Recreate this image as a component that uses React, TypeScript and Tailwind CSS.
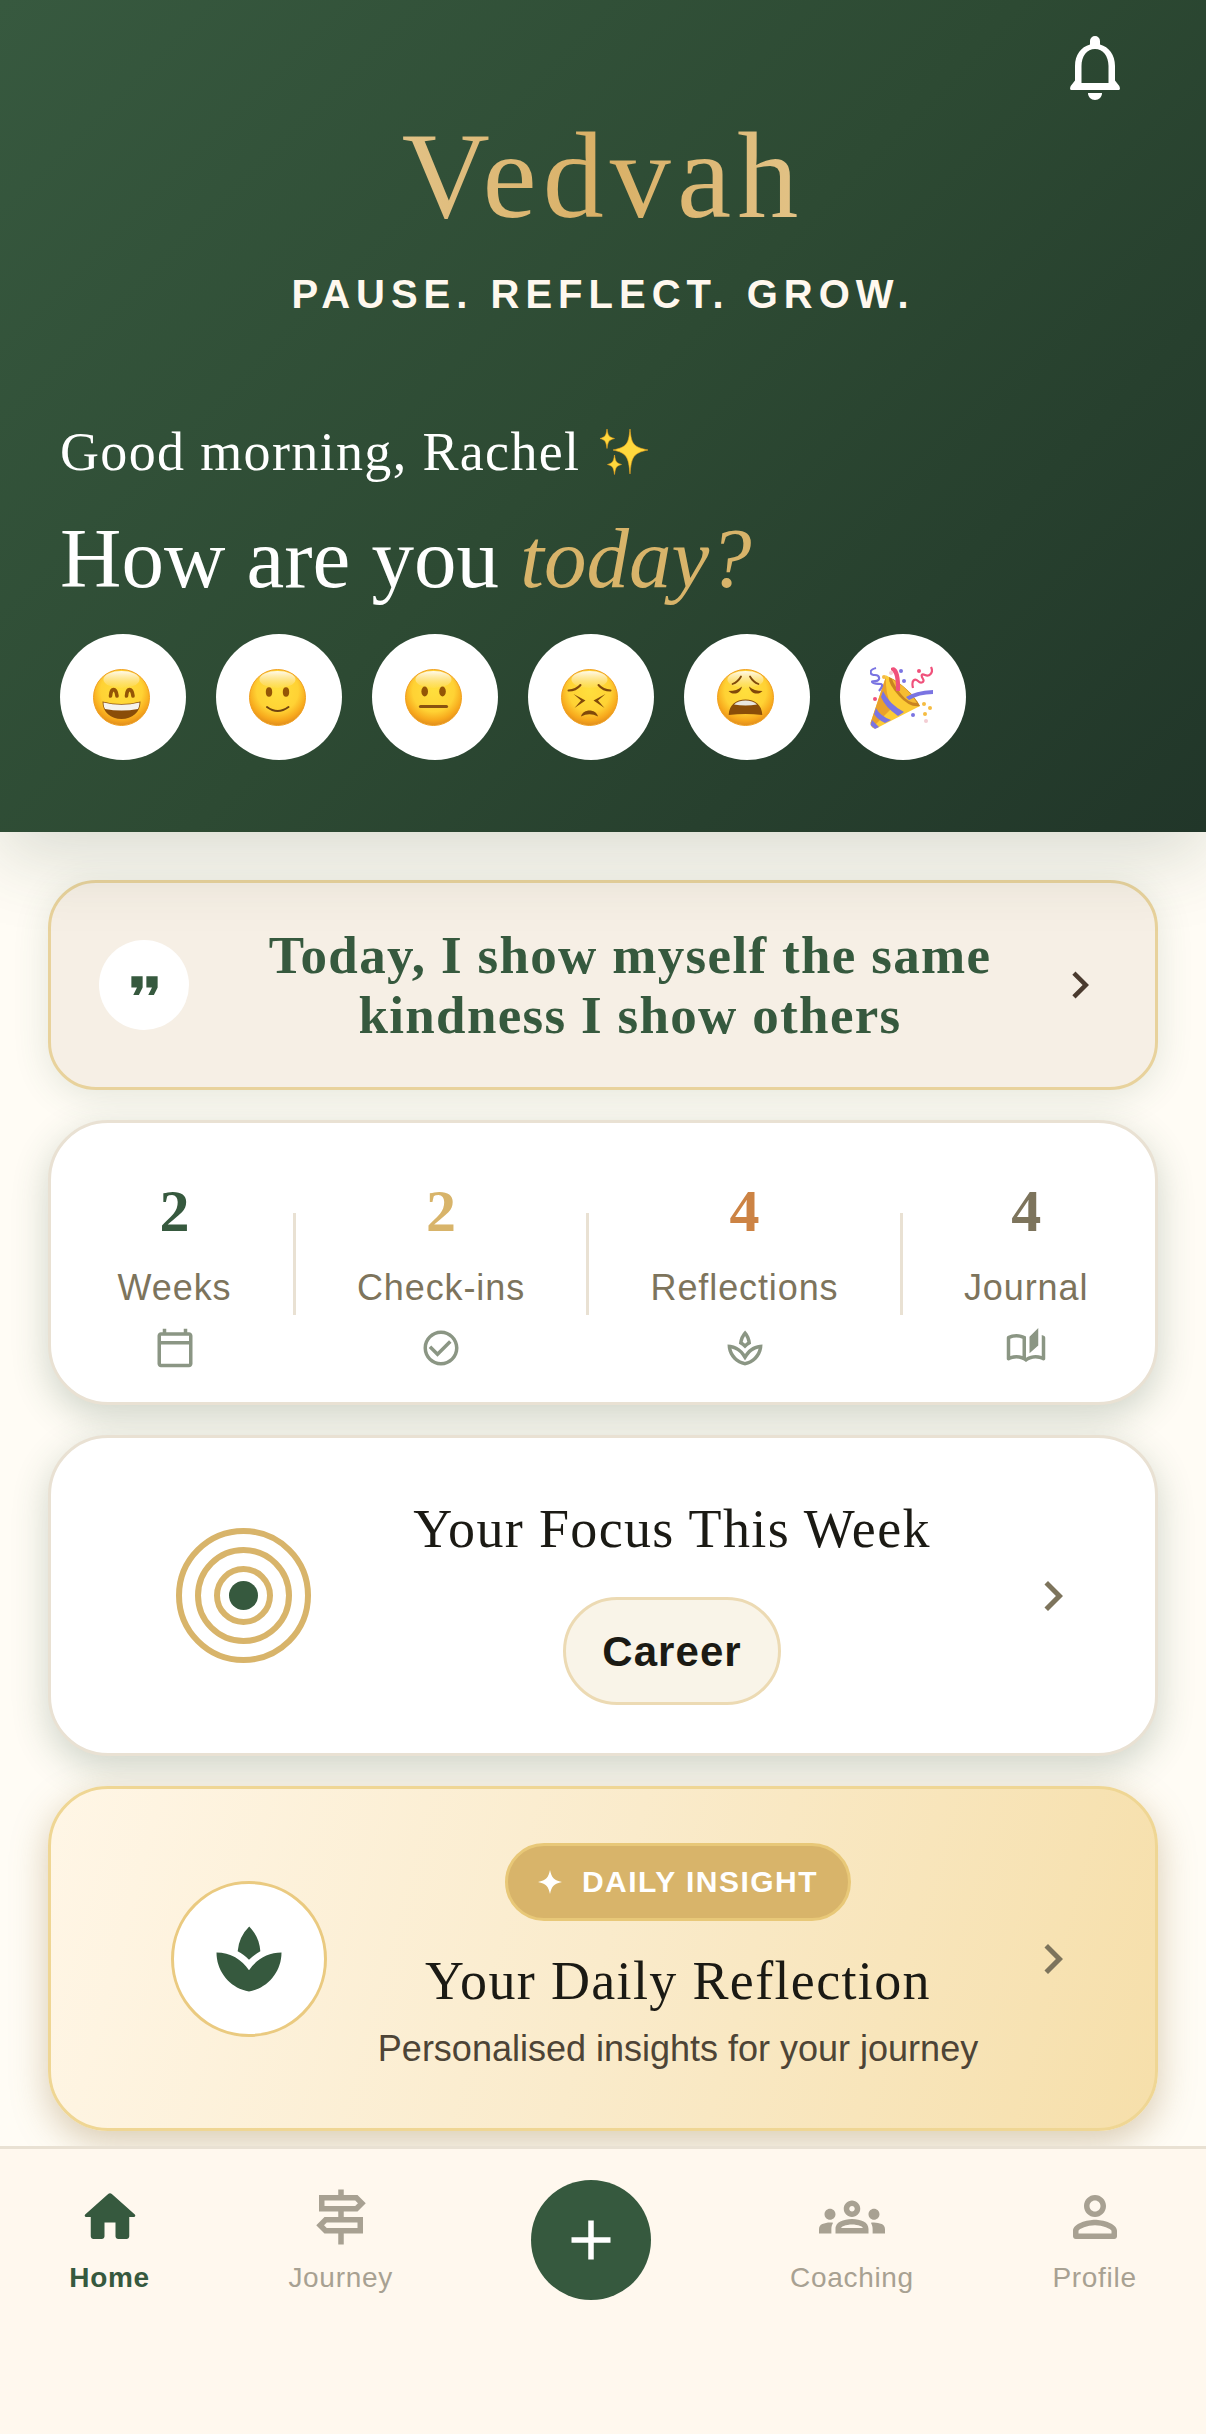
import React from "react";
import {
  MdChevronRight,
  MdCheckCircleOutline,
  MdFormatQuote,
  MdOutlineAutoStories,
  MdOutlineCalendarToday,
  MdOutlineGroups,
  MdOutlineSignpost,
  MdOutlineSpa,
  MdSpa,
} from "react-icons/md";

const serif = "font-['Liberation_Serif',serif]";

const BellIcon = () => (
  <svg viewBox="0 0 50 64" className="w-[50px] h-16" fill="white" aria-hidden="true">
    <path
      fillRule="evenodd"
      d="M20 5a5 5 0 0 1 10 0v3.5C39 11 45 19 45 30v14.500l4.300 5.500c1.700 4-.3 4-2.300 4H3c-2 0-4 0-2.300-4L5 44.500V30C5 19 11 11 20 8.500zM25 13c-8 0-13.500 7-13.500 17v17h27V30C38.500 20 33 13 25 13z"
    />
    <path d="M18 57h14c0 4-3 7-7 7s-7-3-7-7z" />
  </svg>
);

const Sparkles = () => (
  <svg viewBox="0 0 48 48" className="w-12 h-12" fill="#ffd93d" stroke="#f0a51e" strokeWidth="0.600" role="img" aria-label="sparkles">
    <path d="M30 1c1.500 15 3 18 18 21-15 3-16.500 7-18 24-1.500-17-3-21-17-24 14-3 15.500-6 17-21z" />
    <path d="M7 1c1 7 2 8 7.500 9.500C9 12 8 13 7 20.500 6 13 5 12 0 10.500 5 9 6 8 7 1z" />
    <path d="M14.500 27c1 7 2 8 7 9.500-5 1.500-6 2.500-7 10-1-7.500-2-8.500-7-10 5-1.500 6-2.500 7-9.500z" />
  </svg>
);

const Face = ({ children }: { children: React.ReactNode }) => (
  <svg viewBox="0 0 57 57" className="w-[57px] h-[57px]" aria-hidden="true">
    <defs>
      <radialGradient id="skin" cx="0.5" cy="0.38" r="0.62">
        <stop offset="0" stopColor="#ffdf3d" />
        <stop offset="0.6" stopColor="#ffd234" />
        <stop offset="0.85" stopColor="#f7a81c" />
        <stop offset="1" stopColor="#e08d1e" />
      </radialGradient>
      <linearGradient id="shine" x1="0" y1="0" x2="0" y2="1">
        <stop offset="0" stopColor="#fff" stopOpacity="0.9" />
        <stop offset="1" stopColor="#fbe9b8" stopOpacity="0.1" />
      </linearGradient>
    </defs>
    <circle cx="28.5" cy="28.5" r="28" fill="url(#skin)" stroke="#f0a020" />
    <ellipse cx="28.5" cy="10.5" rx="18" ry="8.5" fill="url(#shine)" />
    {children}
  </svg>
);

const Grinning = () => (
  <Face>
    <g fill="none" stroke="#945506" strokeWidth="3.6" strokeLinecap="round">
      <path d="M17.500 27c.5-8.500 5.500-8.500 6.500 0" />
      <path d="M33.500 27c.5-8.500 5.500-8.500 6.500 0" />
    </g>
    <path d="M9.500 32.500Q28.500 37.500 47.500 32.500C47.500 43 39 50 28.500 50S9.500 43 9.500 32.500z" fill="#8a4d08" />
    <path d="M10.500 33.500Q28.500 38 46.500 33.500c0 3-.7 4.700-1.500 6.500Q28.500 43 12 40c-.8-1.800-1.500-3.500-1.500-6.500z" fill="#f5f3ee" />
  </Face>
);

const Smiling = () => (
  <Face>
    <ellipse cx="20" cy="23" rx="3.2" ry="4.7" fill="#945506" />
    <ellipse cx="37" cy="23" rx="3.2" ry="4.7" fill="#945506" />
    <path d="M18 38Q28.500 46 39.500 38" fill="none" stroke="#70430f" strokeWidth="2" strokeLinecap="round" />
  </Face>
);

const Neutral = () => (
  <Face>
    <ellipse cx="19.7" cy="22.5" rx="3.3" ry="5" fill="#945506" />
    <ellipse cx="37.5" cy="22.5" rx="3.3" ry="5" fill="#945506" />
    <path d="M15.500 37.500h26" stroke="#8a5210" strokeWidth="3.200" strokeLinecap="round" />
  </Face>
);

const Persevering = () => (
  <Face>
    <g fill="none" stroke="#80490a" strokeWidth="2" strokeLinecap="round">
      <path d="M7.500 21.500Q15 21.500 19.500 16" />
      <path d="M49.500 21.500Q42 21.500 37.500 16" />
    </g>
    <path d="M12.500 25l12 6.500-11 7.500 6.500-7.500z" fill="#80490a" />
    <path d="M44.500 25l-12 6.500 11 7.500-6.500-7.500z" fill="#80490a" />
    <path d="M20 47.500C22 39.500 35 39.500 37 47.500Q28.500 43 20 47.500z" fill="#80490a" />
  </Face>
);

const Weary = () => (
  <Face>
    <g fill="none" stroke="#80490a" strokeWidth="1.8" strokeLinecap="round">
      <path d="M15.500 15Q21 13 24 7.500" />
      <path d="M41.500 15Q36 13 33 7.500" />
    </g>
    <path d="M11.500 22Q20 22 25 17.500C23 26 15 26 11.500 22z" fill="#80490a" />
    <path d="M45.500 22Q37 22 32 17.500C34 26 42 26 45.500 22z" fill="#80490a" />
    <path d="M11.700 46C12 36 19 30.500 28.500 30.500S45 36 45.300 46Q28.500 44 11.700 46z" fill="#8a4d08" />
    <path d="M17 35.500C22 30 35 30 40 35.500Q28.500 37.500 17 35.500z" fill="#e8e6e0" />
  </Face>
);

const Party = () => (
  <svg viewBox="0 0 63 63" className="w-[63px] h-[63px]" aria-hidden="true">
    <path d="M16 10.500Q14 8 19 11C31 17 44 29 50 40L7 62Q1 64 .5 57z" fill="#fccb35" />
    <path d="M16 10.500L.5 57Q1 60 3 61L22 42Q15 28 16 10.500z" fill="#e9a12b" />
    <path d="M19 11C32 17 44 29 50 40Q40 42 29 30T19 11z" fill="#c98420" />
    <path d="M22 13C33 19 42 28 47 37Q38 37 31 28T22 13z" fill="#f5bc32" />
    <path d="M13 25Q19 38 34 46l-6 4Q15 41 11 31zM6 42Q10 50 21 54l-6 3Q8 54 4 48zM2 54l7 7-4 2-4.500-4z" fill="#7a74e2" />
    <path d="M36 31Q45 25 63 24v4Q49 28 39 34z" fill="#7a74e2" />
    <path d="M21 2c5-3 10 4 9 23h-4C26 12 25 7 21 4z" fill="#f0517b" />
    <g fill="none" strokeWidth="2.200">
      <path d="M6 2C-2 4 0 9 5 9s6 6 0 6-2 3 6 3q3 1-2 7" stroke="#7a74e2" />
      <path d="M61 1c3 6-2 10-6 8s-4 1-2 4-2 5-5 2-7-1-5 7" stroke="#f0517b" />
    </g>
    <g fill="#7a74e2">
      <circle cx="31" cy="5" r="2" />
      <circle cx="34" cy="15" r="2" />
      <circle cx="43" cy="49" r="2" />
    </g>
    <g fill="#f0517b">
      <circle cx="49" cy="5" r="2" />
      <circle cx="5" cy="33" r="2" />
    </g>
    <g fill="#f5bc42">
      <circle cx="14" cy="11" r="2" />
      <circle cx="54" cy="38" r="2" />
      <circle cx="60" cy="42" r="2" />
      <circle cx="55" cy="48" r="2" />
    </g>
    <g fill="#f3cdd3">
      <circle cx="21" cy="7" r="2" />
      <circle cx="56" cy="55" r="2" />
    </g>
  </svg>
);

const TargetIcon = () => (
  <svg viewBox="0 0 135 135" className="w-[135px] h-[135px]" aria-hidden="true">
    <g fill="none" stroke="#d8b46a" strokeWidth="6">
      <circle cx="67.5" cy="67.5" r="64.5" />
      <circle cx="67.5" cy="67.5" r="45.5" />
      <circle cx="67.5" cy="67.5" r="26.5" />
    </g>
    <circle cx="67.5" cy="67.5" r="14.5" fill="#36593e" />
  </svg>
);

const HomeIcon = () => (
  <svg viewBox="0 0 24 24" className="w-[66px] h-[66px]" fill="currentColor" aria-hidden="true">
    <path d="M10 19v-5h4v5c0 .55.45 1 1 1h3c.55 0 1-.45 1-1v-7h1.700c.46 0 .68-.57.33-.87L12.670 3.600c-.38-.34-.96-.34-1.340 0l-8.360 7.530c-.34.3-.13.87.33.87H5v7c0 .55.45 1 1 1h3c.55 0 1-.45 1-1z" />
  </svg>
);

const ProfileIcon = () => (
  <svg viewBox="0 0 24 24" className="w-[66px] h-[66px]" fill="currentColor" aria-hidden="true">
    <path
      fillRule="evenodd"
      d="M12 6c1.100 0 2 .9 2 2s-.9 2-2 2-2-.9-2-2 .9-2 2-2m0 9c2.700 0 5.800 1.290 6 2v1H6v-.99c.2-.72 3.300-2.010 6-2.010m0-11C9.790 4 8 5.790 8 8s1.790 4 4 4 4-1.790 4-4-1.790-4-4-4zm0 9c-2.670 0-8 1.340-8 4v2c0 .55.45 1 1 1h14c.55 0 1-.45 1-1v-2c0-2.660-5.330-4-8-4z"
    />
  </svg>
);

const moods = [
  { label: "Great", icon: <Grinning /> },
  { label: "Good", icon: <Smiling /> },
  { label: "Okay", icon: <Neutral /> },
  { label: "Struggling", icon: <Persevering /> },
  { label: "Exhausted", icon: <Weary /> },
  { label: "Celebrating", icon: <Party /> },
];

const stats = [
  { value: 2, label: "Weeks", color: "text-[#36593e]", icon: <MdOutlineCalendarToday size={42} /> },
  { value: 2, label: "Check-ins", color: "text-[#d8b46a]", icon: <MdCheckCircleOutline size={42} /> },
  { value: 4, label: "Reflections", color: "text-[#cc8344]", icon: <MdOutlineSpa size={42} /> },
  { value: 4, label: "Journal", color: "text-[#7d745c]", icon: <MdOutlineAutoStories size={42} /> },
];

const Header = () => (
  <header className="relative z-10 px-[60px] pt-9 pb-[72px] bg-linear-135 from-[#37593f] via-[#2d4a33] to-[#213629] shadow-[0_24px_72px_rgba(45,74,50,0.18)]">
    <div className="flex justify-end">
      <button aria-label="Notifications" className="px-[26px]">
        <BellIcon />
      </button>
    </div>
    <h1
      className={`${serif} mx-auto mt-4 w-fit text-[122px] leading-[120px] tracking-wider text-transparent bg-clip-text bg-linear-to-r from-[#e2c286] via-[#d9b066] to-[#e2c286]`}>
      Vedvah
    </h1>
    <p className="mt-[34px] text-center text-[40px] leading-12 font-bold tracking-[6px] text-[#fff8ee]">
      PAUSE. REFLECT. GROW.
    </p>
    <p className={`${serif} mt-[98px] flex items-center gap-5 text-[54px] leading-18 tracking-wide text-white`}>
      Good morning, Rachel
      <Sparkles />
    </p>
    <h2 className={`${serif} mt-[22px] text-[85px] leading-24 text-white`}>
      How are you <em className="text-[#d8b46a]">today?</em>
    </h2>
    <div className="mt-7 flex gap-[30px]">
      {moods.map((mood) => (
        <button
          key={mood.label}
          aria-label={mood.label}
          className="flex w-[126px] h-[126px] items-center justify-center rounded-full bg-white pr-1">
          {mood.icon}
        </button>
      ))}
    </div>
  </header>
);

const QuoteCard = () => (
  <button className="flex w-full items-center rounded-[48px] border-3 border-[#e8d29c] bg-[#f6efe5] px-12 py-[42px] shadow-[0_6px_36px_rgba(54,89,62,0.14)]">
    <span className="flex w-[90px] h-[90px] shrink-0 items-center justify-center rounded-full bg-white text-[#36593e]">
      <MdFormatQuote size={45} />
    </span>
    <span className={`${serif} ml-12 mr-[30px] flex-1 text-center text-[53px] leading-15 font-bold tracking-wide text-[#36593e]`}>
      Today, I show myself the same kindness I show others
    </span>
    <MdChevronRight size={54} className="shrink-0 text-[#4a3a2e]" />
  </button>
);

const StatsCard = () => (
  <section className="flex items-center justify-around rounded-[60px] border-3 border-[#e9e1d3] bg-white px-9 pt-9 pb-[33px] shadow-[0_12px_36px_rgba(54,89,62,0.24)]">
    {stats.map((stat, i) => (
      <React.Fragment key={stat.label}>
        {i > 0 && <div className="h-[102px] w-[3px] bg-[#e9e1d3]" />}
        <div className="flex flex-col items-center">
          <span className={`${serif} text-[60px] leading-26 font-bold ${stat.color}`}>{stat.value}</span>
          <span className="text-4xl leading-[50px] tracking-wide text-[#7d745c]">{stat.label}</span>
          <span className="mt-[14px] text-[#8b9684]">{stat.icon}</span>
        </div>
      </React.Fragment>
    ))}
  </section>
);

const FocusCard = () => (
  <button className="grid w-full grid-cols-[240px_1fr_102px] items-center rounded-[60px] border-3 border-[#e9e1d3] bg-white px-[72px] py-12 shadow-[0_12px_36px_rgba(54,89,62,0.24)]">
    <span className="flex justify-center">
      <TargetIcon />
    </span>
    <span className="flex flex-col items-center">
      <span className={`${serif} text-[54px] leading-[86px] tracking-wide text-[#1b1a14]`}>Your Focus This Week</span>
      <span className="mt-[25px] flex h-[108px] items-center rounded-full border-3 border-[#ecdab3] bg-[#f9f4e8] px-9 text-[42px] font-bold tracking-wide text-[#1b1a14]">
        Career
      </span>
    </span>
    <MdChevronRight size={60} className="justify-self-end text-[#7d745c]" />
  </button>
);

const InsightCard = () => (
  <button className="grid w-full grid-cols-[252px_1fr_102px] items-center rounded-[60px] border-3 border-[#efd694] bg-linear-105 from-[#fff6e6] via-[#faebcb] to-[#f6dfaa] px-[72px] py-[54px] shadow-[0_12px_36px_rgba(150,120,60,0.36)]">
    <span className="flex w-[156px] h-[156px] items-center justify-center justify-self-center rounded-full border-3 border-[#eaca80] bg-white text-[#36593e]">
      <MdSpa size={78} />
    </span>
    <span className="flex flex-col items-center whitespace-nowrap">
      <span className="flex h-[78px] items-center gap-5 rounded-full border-3 border-[#e8c878] bg-[#d8b46a] px-[30px] text-3xl font-bold tracking-wider text-white">
        <svg viewBox="0 0 24 24" className="w-6 h-6" fill="white" aria-hidden="true">
          <path d="M12 0c1.500 7.500 4 10.500 12 12-8 1.500-10.500 4.500-12 12-1.500-7.500-4-10.500-12-12 8-1.500 10.500-4.500 12-12z" />
        </svg>
        DAILY INSIGHT
      </span>
      <span className={`${serif} mt-[17px] text-[54px] leading-[86px] tracking-wide text-[#1b1a14]`}>Your Daily Reflection</span>
      <span className="text-4xl leading-[50px] text-[#4d4436]">Personalised insights for your journey</span>
    </span>
    <MdChevronRight size={60} className="justify-self-end text-[#7d745c]" />
  </button>
);

const NavItem = ({ label, icon, active }: { label: string; icon: React.ReactNode; active?: boolean }) => (
  <a
    href={`#${label.toLowerCase()}`}
    className={`flex flex-col items-center gap-[10px] text-[28px] leading-9 tracking-wide ${
      active ? "font-bold text-[#36593e]" : "text-[#a8a192]"
    }`}>
    {icon}
    {label}
  </a>
);

const BottomNav = () => (
  <nav className="relative z-10 flex grow items-start border-t-3 border-[#e9e1d3] bg-[#fff8ee] pt-[31px] pb-[134px]">
    <div className="flex w-full items-center justify-around">
      <NavItem label="Home" icon={<HomeIcon />} active />
      <NavItem label="Journey" icon={<MdOutlineSignpost size={66} />} />
      <button aria-label="Add" className="flex w-[120px] h-[120px] items-center justify-center rounded-full bg-[#36593e]">
        <svg viewBox="0 0 40 40" className="w-10 h-10" stroke="white" strokeWidth="5.500" aria-hidden="true">
          <path d="M20 .5v39M.5 20h39" />
        </svg>
      </button>
      <NavItem label="Coaching" icon={<MdOutlineGroups size={66} />} />
      <NavItem label="Profile" icon={<ProfileIcon />} />
    </div>
  </nav>
);

const App = () => {
  return (
    <div className="flex min-h-screen flex-col bg-[#fffcf5] font-['Liberation_Sans',Arial,sans-serif]">
      <Header />
      <main className="flex flex-col gap-[30px] px-12 pt-12 pb-[15px]">
        <QuoteCard />
        <StatsCard />
        <FocusCard />
        <InsightCard />
      </main>
      <BottomNav />
    </div>
  );
};

export default App;
